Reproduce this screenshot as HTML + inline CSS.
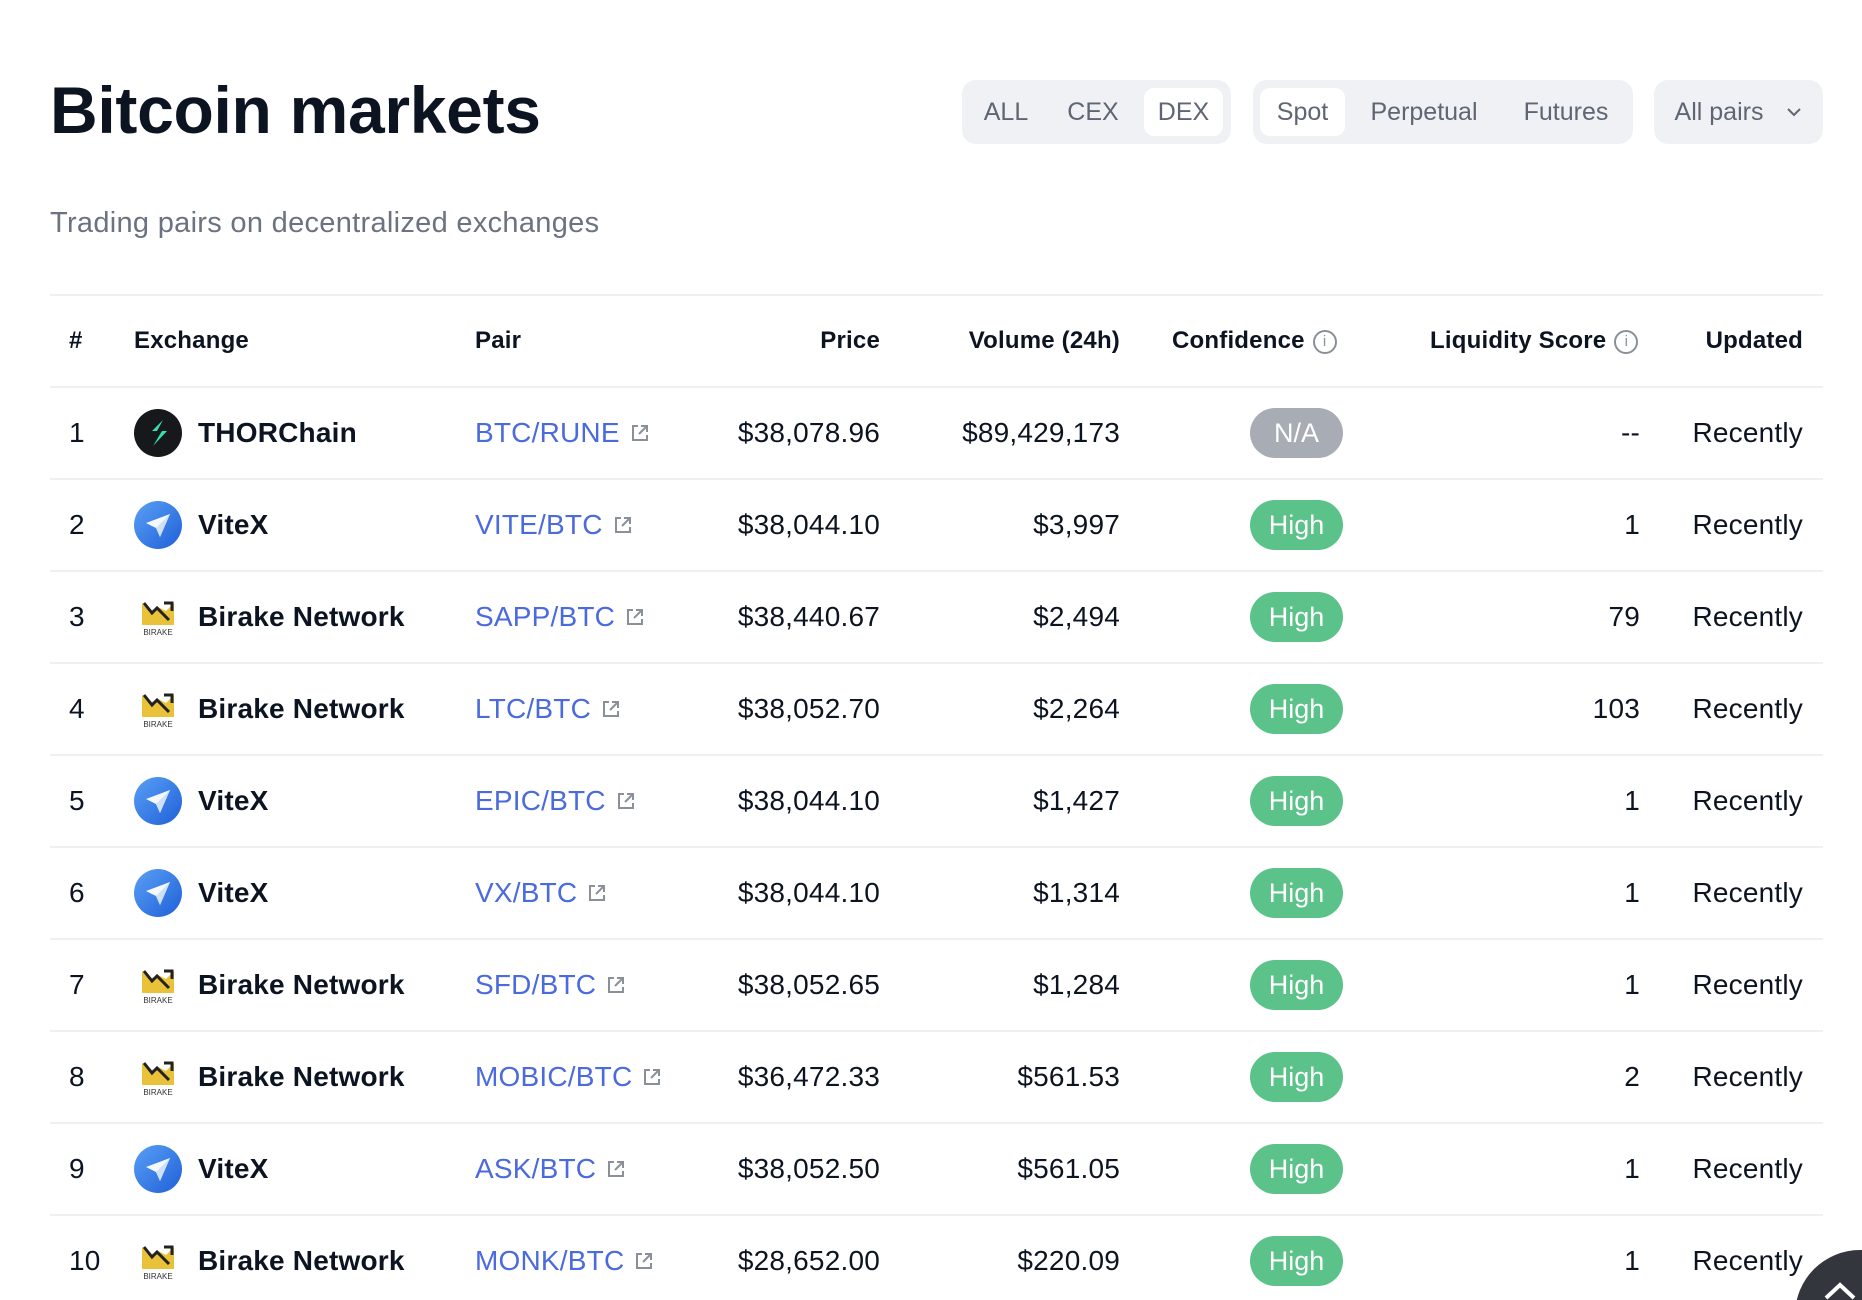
<!DOCTYPE html>
<html style="overflow:hidden;height:1300px"><head><meta charset="utf-8"><style>
*{margin:0;padding:0;box-sizing:border-box}
body{width:1862px;height:1300px;overflow:hidden;background:#fff;font-family:"Liberation Sans",sans-serif;color:#0d1421;position:relative}
h1{position:absolute;left:50px;top:72px;font-size:66px;font-weight:700;letter-spacing:-0.3px}
.sub{position:absolute;left:50px;top:207px;font-size:29px;color:#6b7280;letter-spacing:0.3px}
.grp{position:absolute;top:80px;height:64px;background:#eff1f5;border-radius:14px}
.b{position:absolute;top:8px;height:48px;line-height:48px;font-size:25px;color:#5f6673;font-weight:500;text-align:center;border-radius:10px}
.b.on{background:#fff}
.hr{position:absolute;left:50px;width:1773px;height:2px;background:#eef0f3}
.c{position:absolute;font-size:28px;white-space:nowrap;transform:translateY(-50%);letter-spacing:0.2px}
.h{font-size:24px;font-weight:700}
.r{text-align:right}
.ic{position:absolute;width:48px;height:48px;border-radius:50%;transform:translateY(-50%)}
.lnk{color:#4a6ade}
.badge{position:absolute;left:1250px;width:93px;height:50px;border-radius:25px;background:#5bc38a;color:#fff;font-size:27px;line-height:50px;text-align:center;transform:translateY(-50%)}
.info{display:inline-block;width:24px;height:24px;border:2px solid #8a8f98;border-radius:50%;font-size:15px;line-height:20px;text-align:center;color:#8a8f98;vertical-align:middle;margin-left:8px;font-weight:400}
#clip{position:absolute;left:0;top:0;width:1862px;height:1300px;overflow:hidden}
</style></head><body>
<div id="clip">
<h1>Bitcoin markets</h1>
<div class="sub">Trading pairs on decentralized exchanges</div>
<div class="grp" style="left:962px;width:269px">
<div class="b" style="left:8px;width:72px">ALL</div>
<div class="b" style="left:92px;width:78px">CEX</div>
<div class="b on" style="left:182px;width:79px">DEX</div>
</div>
<div class="grp" style="left:1253px;width:380px">
<div class="b on" style="left:7px;width:85px">Spot</div>
<div class="b" style="left:96px;width:150px">Perpetual</div>
<div class="b" style="left:258px;width:110px">Futures</div>
</div>
<div class="grp" style="left:1654px;width:169px">
<div class="b" style="left:10px;width:110px">All pairs</div>
<svg style="position:absolute;left:132px;top:26px" width="16" height="12" viewBox="0 0 16 12"><path d="M2 3l6 6 6-6" fill="none" stroke="#5f6673" stroke-width="2"/></svg>
</div>
<div class="hr" style="top:294px"></div>
<div class="c h" style="left:69px;top:341px">#</div>
<div class="c h" style="left:134px;top:341px">Exchange</div>
<div class="c h" style="left:475px;top:341px">Pair</div>
<div class="c h r" style="right:982px;top:341px">Price</div>
<div class="c h r" style="right:742px;top:341px">Volume (24h)</div>
<div class="c h" style="left:1172px;top:341px">Confidence<span class="info">i</span></div>
<div class="c h" style="left:1430px;top:341px">Liquidity Score<span class="info">i</span></div>
<div class="c h r" style="right:59px;top:341px">Updated</div>
<div class="hr" style="top:386px"></div>
<div id="rows"></div>
<svg style="position:absolute;left:1792px;top:1248px" width="70" height="52" viewBox="0 0 70 52"><circle cx="68" cy="67" r="65" fill="#33363d"/><path d="M34 50L48 37l14 13" fill="none" stroke="#fff" stroke-width="4"/></svg>
</div>
<script>
var d=[["1","T","THORChain","BTC/RUNE","$38,078.96","$89,429,173","N/A","--"],
["2","V","ViteX","VITE/BTC","$38,044.10","$3,997","High","1"],
["3","B","Birake Network","SAPP/BTC","$38,440.67","$2,494","High","79"],
["4","B","Birake Network","LTC/BTC","$38,052.70","$2,264","High","103"],
["5","V","ViteX","EPIC/BTC","$38,044.10","$1,427","High","1"],
["6","V","ViteX","VX/BTC","$38,044.10","$1,314","High","1"],
["7","B","Birake Network","SFD/BTC","$38,052.65","$1,284","High","1"],
["8","B","Birake Network","MOBIC/BTC","$36,472.33","$561.53","High","2"],
["9","V","ViteX","ASK/BTC","$38,052.50","$561.05","High","1"],
["10","B","Birake Network","MONK/BTC","$28,652.00","$220.09","High","1"]];
var ext='<svg width="20" height="20" viewBox="0 0 20 20" style="margin-left:10px;vertical-align:-1px"><path d="M8 3H3v14h14v-5M11 3h6v6M17 3l-8 8" fill="none" stroke="#8a8f98" stroke-width="2"/></svg>';
var icons={T:'<div class="ic" style="background:#16181c;left:134px;top:Ypx"><svg width="48" height="48" viewBox="0 0 48 48"><path d="M29 11L18 22h10L19 37l14-15H23z" fill="#33e0b1"/></svg></div>',
V:'<div class="ic" style="background:linear-gradient(135deg,#5aa0f5,#1f5fd8);left:134px;top:Ypx"><svg width="48" height="48" viewBox="0 0 48 48"><path d="M12 22L36 13 26 36 22 27z" fill="#fff" opacity=".95"/><path d="M22 27l14-14-10 23z" fill="#cfe0fa"/></svg></div>',
B:'<div class="ic" style="left:134px;top:Ypx;border-radius:0"><svg width="48" height="48" viewBox="0 0 48 48"><path d="M8 10l8 8 8-4 8 4 8-8v22H8z" fill="#e9c23a"/><path d="M10 10l8 10 5-5 12 12M30 10h8v8" fill="none" stroke="#222" stroke-width="3"/><text x="24" y="42" font-size="8" text-anchor="middle" fill="#333" font-family="Liberation Sans">BIRAKE</text></svg></div>'};
var h='';
d.forEach(function(r,i){var y=433+i*92;
h+='<div class="c" style="left:69px;top:'+y+'px">'+r[0]+'</div>';
h+=icons[r[1]].replace('Y',y);
h+='<div class="c" style="left:198px;top:'+y+'px;font-weight:700">'+r[2]+'</div>';
h+='<div class="c lnk" style="left:475px;top:'+y+'px">'+r[3]+ext+'</div>';
h+='<div class="c r" style="right:982px;top:'+y+'px">'+r[4]+'</div>';
h+='<div class="c r" style="right:742px;top:'+y+'px">'+r[5]+'</div>';
h+='<div class="badge" style="top:'+y+'px;'+(r[6]=='N/A'?'background:#a8adb5':'')+'">'+r[6]+'</div>';
h+='<div class="c r" style="right:222px;top:'+y+'px">'+r[7]+'</div>';
h+='<div class="c r" style="right:59px;top:'+y+'px">Recently</div>';
if(i<9)h+='<div class="hr" style="top:'+(y+45)+'px"></div>';
});
document.getElementById('rows').innerHTML=h;
</script>
</body></html>
